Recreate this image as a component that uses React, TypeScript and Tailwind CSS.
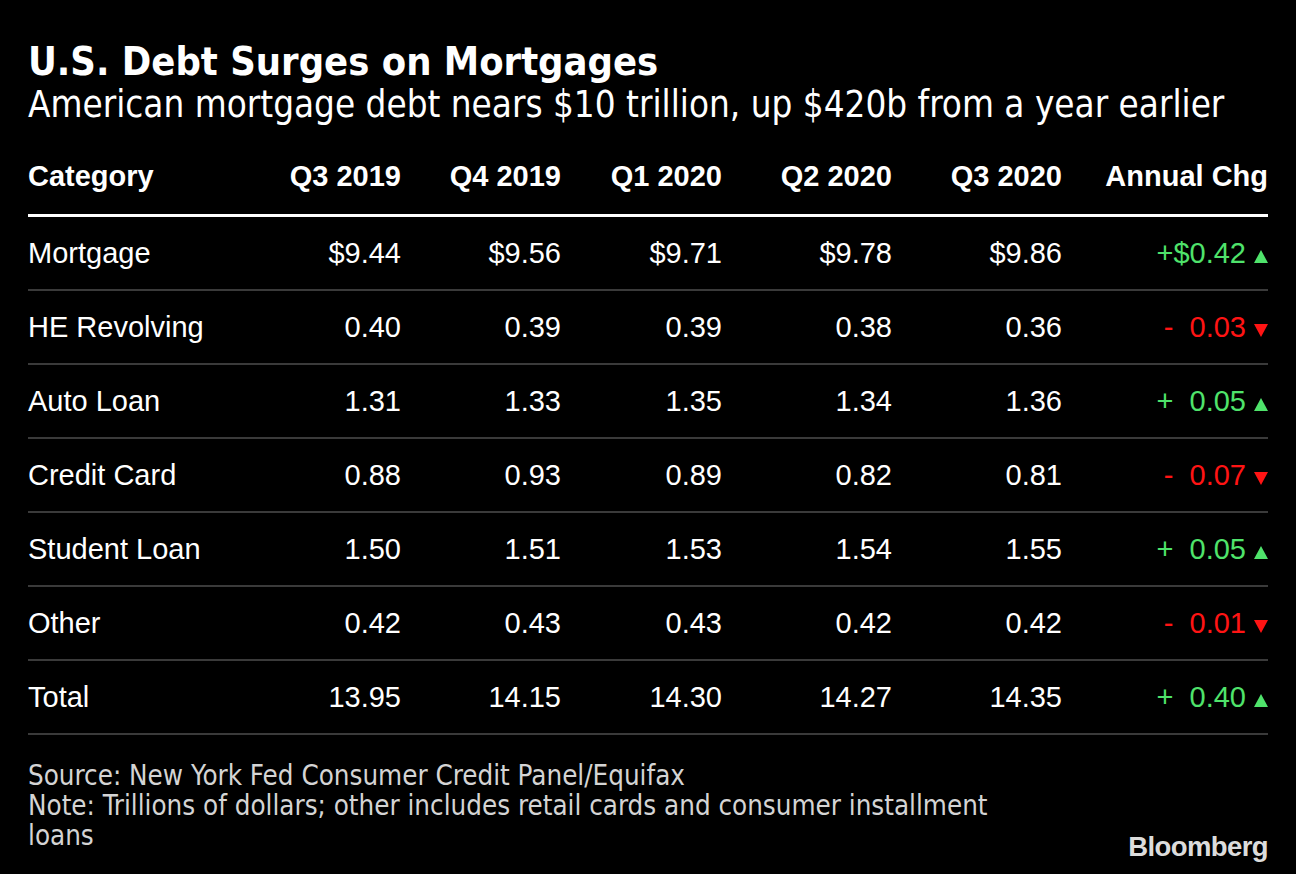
const GREEN = 'text-[#4fe36b]';
const RED = 'text-[#ff1414]';

type Row = {
  label: string;
  values: string[];
  sign: '+' | '-';
  change: string;
  dollar?: boolean;
};

const rows: Row[] = [
  { label: 'Mortgage', values: ['$9.44', '$9.56', '$9.71', '$9.78', '$9.86'], sign: '+', change: '0.42', dollar: true },
  { label: 'HE Revolving', values: ['0.40', '0.39', '0.39', '0.38', '0.36'], sign: '-', change: '0.03' },
  { label: 'Auto Loan', values: ['1.31', '1.33', '1.35', '1.34', '1.36'], sign: '+', change: '0.05' },
  { label: 'Credit Card', values: ['0.88', '0.93', '0.89', '0.82', '0.81'], sign: '-', change: '0.07' },
  { label: 'Student Loan', values: ['1.50', '1.51', '1.53', '1.54', '1.55'], sign: '+', change: '0.05' },
  { label: 'Other', values: ['0.42', '0.43', '0.43', '0.42', '0.42'], sign: '-', change: '0.01' },
  { label: 'Total', values: ['13.95', '14.15', '14.30', '14.27', '14.35'], sign: '+', change: '0.40' },
];

const headers = ['Q3 2019', 'Q4 2019', 'Q1 2020', 'Q2 2020', 'Q3 2020', 'Annual Chg'];

const gridCols = 'grid grid-cols-[213px_160px_160px_161px_170px_170px_206px]';

function Triangle({ up }: { up: boolean }) {
  return (
    <svg width="14" height="13" viewBox="0 0 14 13" className="ml-[8px] shrink-0">
      {up ? (
        <polygon points="7,0 14,13 0,13" fill="#4fe36b" />
      ) : (
        <polygon points="0,0 14,0 7,13" fill="#ff1414" />
      )}
    </svg>
  );
}

export default function App() {
  return (
    <div className="w-[1296px] h-[874px] bg-black text-white px-[28px] overflow-hidden">
      {/* Title */}
      <h1 className="pt-[40px] text-[39.5px] leading-[42px] font-bold font-['DejaVu_Sans_Condensed','DejaVu_Sans',sans-serif]">
        U.S. Debt Surges on Mortgages
      </h1>
      <p className="mt-[3px] text-[36.5px] leading-[40px] font-['DejaVu_Sans_Condensed','DejaVu_Sans',sans-serif]">
        American mortgage debt nears $10 trillion, up $420b from a year earlier
      </p>

      {/* Table */}
      <div className="mt-[35px] font-['Liberation_Sans',Arial,sans-serif] text-[29px]">
        <div className={`${gridCols} h-[57px] border-b-[3px] border-white font-bold leading-[32px]`}>
          <div>Category</div>
          {headers.map((h) => (
            <div key={h} className="text-right">{h}</div>
          ))}
        </div>

        {rows.map((row) => {
          const up = row.sign === '+';
          return (
            <div
              key={row.label}
              className={`${gridCols} h-[74px] items-center border-b-2 border-[#3a3a3a] leading-[32px]`}
            >
              <div>{row.label}</div>
              {row.values.map((v, i) => (
                <div key={i} className="text-right">{v}</div>
              ))}
              <div className={`flex items-baseline justify-end ${up ? GREEN : RED}`}>
                <span className="whitespace-pre">
                  {row.sign}
                  {row.dollar ? '$' : '\u2007'}
                  {row.change}
                </span>
                <Triangle up={up} />
              </div>
            </div>
          );
        })}
      </div>

      {/* Footer */}
      <div className="mt-[25px] flex items-end justify-between">
        <div className="max-w-[1000px] pb-[6px] text-[27.5px] leading-[30px] text-[#d4d4d4] font-['DejaVu_Sans_Condensed','DejaVu_Sans',sans-serif]">
          <p>Source: New York Fed Consumer Credit Panel/Equifax</p>
          <p>Note: Trillions of dollars; other includes retail cards and consumer installment loans</p>
        </div>
        <div className="-mb-[4px] text-[27.5px] leading-[26px] font-bold tracking-[-0.6px] text-[#dcdcdc] font-['Liberation_Sans',Arial,sans-serif]">
          Bloomberg
        </div>
      </div>
    </div>
  );
}
